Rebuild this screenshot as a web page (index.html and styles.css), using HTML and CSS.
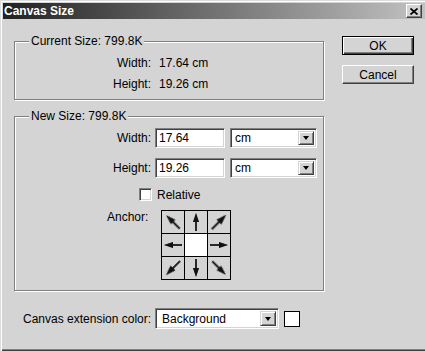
FILE: index.html
```html
<!DOCTYPE html>
<html lang="en">
<head>
    <meta charset="UTF-8">
    <title>Canvas Size</title>
    <link rel="stylesheet" href="styles.css">
</head>
<body>

    <div class="window">
        <!-- Title bar -->
        <div class="titlebar">
            <span class="title">Canvas Size</span>
            <button class="close" aria-label="Close">
                <svg width="8" height="7" viewBox="0 0 8 7"><path d="M0.5 0.5 L7.5 6.5 M7.5 0.5 L0.5 6.5" stroke="#000" stroke-width="1.7" fill="none"/></svg>
            </button>
        </div>

        <div class="client">
            <div class="main">
                <!-- Current size -->
                <div class="group current">
                    <span class="group-title">Current Size: 799.8K</span>
                    <div class="row"><span class="label">Width:</span><span class="value">17.64 cm</span></div>
                    <div class="row"><span class="label">Height:</span><span class="value">19.26 cm</span></div>
                </div>

                <!-- New size -->
                <div class="group new">
                    <span class="group-title">New Size: 799.8K</span>
                    <div class="field">
                        <label class="label" for="w">Width:</label>
                        <input class="text sunken" id="w" type="text" value="17.64">
                        <div class="select unit sunken"><span>cm</span><span class="drop"></span></div>
                    </div>
                    <div class="field">
                        <label class="label" for="h">Height:</label>
                        <input class="text sunken" id="h" type="text" value="19.26">
                        <div class="select unit sunken"><span>cm</span><span class="drop"></span></div>
                    </div>
                    <div class="check"><span class="box sunken"></span>Relative</div>
                    <div class="anchor-row">
                        <span class="anchor-label">Anchor:</span>
                        <div class="anchor">
                            <div class="cell"><svg class="arrow nw" viewBox="0 0 22 22"><use href="#arr"/></svg></div>
                            <div class="cell"><svg class="arrow n" viewBox="0 0 22 22"><use href="#arr"/></svg></div>
                            <div class="cell"><svg class="arrow ne" viewBox="0 0 22 22"><use href="#arr"/></svg></div>
                            <div class="cell"><svg class="arrow w" viewBox="0 0 22 22"><use href="#arr"/></svg></div>
                            <div class="cell center"></div>
                            <div class="cell"><svg class="arrow e" viewBox="0 0 22 22"><use href="#arr"/></svg></div>
                            <div class="cell"><svg class="arrow sw" viewBox="0 0 22 22"><use href="#arr"/></svg></div>
                            <div class="cell"><svg class="arrow s" viewBox="0 0 22 22"><use href="#arr"/></svg></div>
                            <div class="cell"><svg class="arrow se" viewBox="0 0 22 22"><use href="#arr"/></svg></div>
                        </div>
                    </div>
                </div>

                <!-- Extension colour -->
                <div class="ext-row">
                    <span class="ext-label">Canvas extension color:</span>
                    <div class="select ext sunken"><span>Background</span><span class="drop"></span></div>
                    <span class="swatch"></span>
                </div>
            </div>

            <div class="side">
                <button class="btn default">OK</button>
                <button class="btn">Cancel</button>
            </div>
        </div>
    </div>

    <svg width="0" height="0" style="position:absolute">
        <defs>
            <g id="arr">
                <line x1="2" y1="11" x2="13" y2="11" stroke="#111" stroke-width="1.6"/>
                <polygon points="11,8 20,11 11,14" fill="#111"/>
            </g>
        </defs>
    </svg>

</body>
</html>
```

FILE: styles.css
```css
body {
    margin: 0;
    font-family: "Liberation Sans", Arial, sans-serif;
    font-size: 12px;
    color: #000;
}
.window {
    width: 425px;
    height: 351px;
    box-sizing: border-box;
    padding: 3px 0 0 3px;
    background: #d4d4d4;
    box-shadow: inset 1px 1px 0 #dcdcdc, inset 2px 2px 0 #fff, inset 0 -1px 0 #404040, inset 0 -2px 0 #808080;
}
.titlebar {
    height: 16px;
    display: flex;
    align-items: center;
    justify-content: space-between;
    padding-left: 1px;
    background: linear-gradient(to right, #222 0%, #5a5a5a 35%, #c2c2c2 100%);
}
.title {
    color: #fff;
    font-weight: bold;
    font-size: 12px;
    line-height: 16px;
}
.close {
    width: 16px;
    height: 14px;
    margin-right: 3px;
    padding: 0;
    display: flex;
    align-items: center;
    justify-content: center;
    background: #d4d4d4;
    border: 1px solid;
    border-color: #fff #404040 #404040 #fff;
    box-shadow: inset -1px -1px 0 #808080;
    box-sizing: border-box;
}
.client {
    display: flex;
}
.main {
    width: 321px;
    box-sizing: border-box;
    padding-left: 11px;
}
.group {
    position: relative;
    box-sizing: border-box;
    border: 1px solid #808080;
    box-shadow: inset 1px 1px 0 #fff, 1px 1px 0 #fff;
}
.group-title {
    position: absolute;
    top: -8px;
    left: 14px;
    padding: 0 2px;
    line-height: 14px;
    background: #d4d4d4;
}
.current {
    margin-top: 22px;
    height: 59px;
    padding-top: 10px;
}
.row {
    display: flex;
    align-items: center;
    height: 21px;
}
.label {
    width: 136px;
    text-align: right;
}
.value {
    margin-left: 8px;
}
.sunken {
    background: #fff;
    border: 1px solid;
    border-color: #808080 #fff #fff #808080;
    box-shadow: inset 1px 1px 0 #404040, inset -1px -1px 0 #d4d4d4;
    box-sizing: border-box;
}
.new {
    margin-top: 16px;
    height: 175px;
    padding-top: 11px;
}
.field {
    display: flex;
    align-items: center;
    height: 20px;
    margin-bottom: 10px;
}
.text {
    width: 70px;
    height: 20px;
    margin: 0 0 0 4px;
    padding: 0 0 0 3px;
    font: inherit;
    color: #000;
    outline: none;
}
.select {
    display: flex;
    align-items: center;
    padding: 2px 2px 2px 4px;
}
.unit {
    width: 87px;
    height: 20px;
    margin-left: 5px;
}
.drop {
    width: 16px;
    align-self: stretch;
    margin-left: auto;
    display: flex;
    align-items: center;
    justify-content: center;
    background: #d4d4d4;
    border: 1px solid;
    border-color: #d4d4d4 #404040 #404040 #d4d4d4;
    box-shadow: inset 1px 1px 0 #fff, inset -1px -1px 0 #808080;
    box-sizing: border-box;
}
.drop::after {
    content: "";
    border-top: 4px solid #000;
    border-left: 3.5px solid transparent;
    border-right: 3.5px solid transparent;
}
.check {
    display: flex;
    align-items: center;
    height: 13px;
    margin: 1px 0 0 124px;
}
.box {
    width: 13px;
    height: 13px;
    margin-right: 5px;
}
.anchor-row {
    display: flex;
    margin-top: 9px;
    padding-left: 92px;
}
.anchor-label {
    width: 54px;
    line-height: 14px;
}
.anchor {
    display: grid;
    grid-template-columns: repeat(3, 22px);
    grid-auto-rows: 22px;
    gap: 1px;
    border: 1px solid #000;
    background: #000;
}
.cell {
    background: #d4d4d4;
}
.cell.center {
    background: #fff;
}
.arrow {
    display: block;
    width: 22px;
    height: 22px;
    filter: drop-shadow(0 0 0.5px rgba(0, 0, 0, 0.45));
}
.arrow.e { transform: rotate(0deg); }
.arrow.n { transform: rotate(-90deg); }
.arrow.w { transform: rotate(180deg); }
.arrow.s { transform: rotate(90deg); }
.arrow.ne { transform: rotate(-45deg) scale(1.12); }
.arrow.nw { transform: rotate(-135deg) scale(1.05); }
.arrow.sw { transform: rotate(135deg) scale(1.1); }
.arrow.se { transform: rotate(45deg) scale(1.05); }
.ext-row {
    display: flex;
    align-items: center;
    height: 21px;
    margin-top: 17px;
    padding-left: 9px;
}
.ext-label {
    width: 132px;
}
.ext {
    width: 124px;
    height: 21px;
    padding-left: 6px;
}
.swatch {
    width: 16px;
    height: 16px;
    margin-left: 5px;
    box-sizing: border-box;
    border: 1px solid #000;
    background: #fff;
}
.side {
    display: flex;
    flex-direction: column;
    margin: 17px 0 0 18px;
}
.btn {
    width: 72px;
    height: 19px;
    padding: 0;
    font: inherit;
    color: #000;
    background: #d4d4d4;
    border: 1px solid;
    border-color: #fff #404040 #404040 #fff;
    box-shadow: inset -1px -1px 0 #808080;
    box-sizing: border-box;
}
.btn + .btn {
    margin-top: 10px;
}
.btn.default {
    border-color: #000;
    box-shadow: inset 1px 1px 0 #fff, inset -1px -1px 0 #404040, inset -2px -2px 0 #808080;
}
```
